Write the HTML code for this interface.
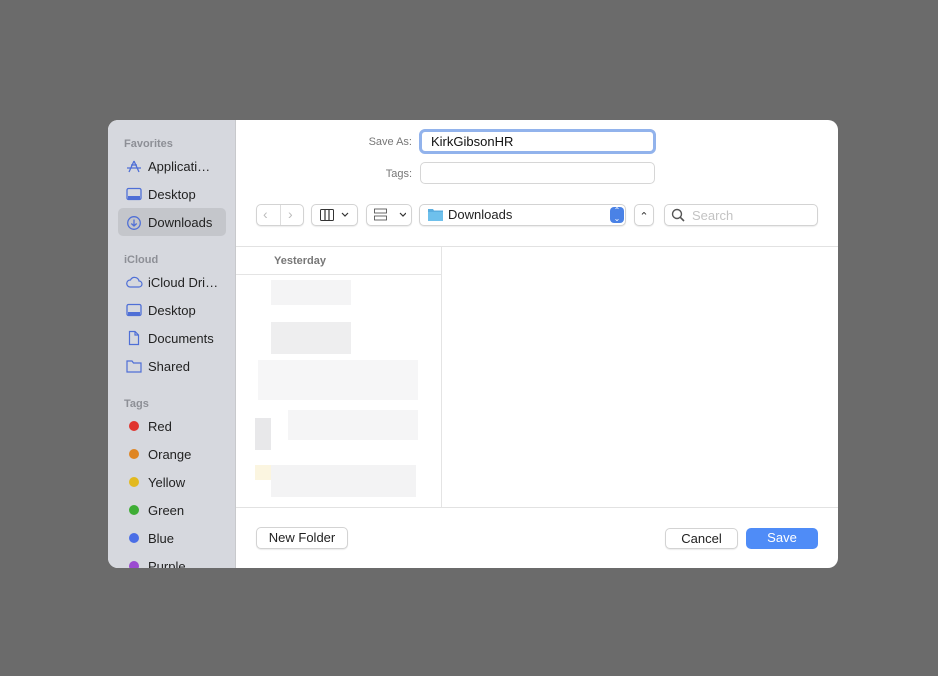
<!DOCTYPE html>
<html><head><meta charset="utf-8"><style>
*{box-sizing:border-box;margin:0;padding:0}
body{width:938px;height:676px;background:#6b6b6b;font-family:"Liberation Sans",sans-serif;position:relative;overflow:hidden}
.dlg{position:absolute;left:108px;top:120px;width:730px;height:448px;background:#fff;border-radius:10px;overflow:hidden}
.side{position:absolute;left:0;top:0;width:128px;height:448px;background:#d6d8de;border-right:1px solid #c8c9cc}
.h{position:absolute;left:16px;font-size:11px;color:#8d8f96;font-weight:bold}
.it{position:absolute;left:40px;font-size:13px;color:#222}
.ic{position:absolute;left:18px}
.dot{position:absolute;left:21px;width:10px;height:10px;border-radius:5px}
.abs{position:absolute}
.lbl{position:absolute;font-size:11px;color:#777;text-align:right}
.btn{position:absolute;background:#fff;border:1px solid #d3d3d3;border-radius:5px;box-shadow:0 1px 1px rgba(0,0,0,.08)}
.blk{position:absolute;background:#f2f2f3}
</style></head><body>
<div class="dlg">
 <div class="side">
  <div class="h" style="top:18px">Favorites</div>
  <svg class="ic" style="top:39px" width="16" height="14"><path d="M3 13L8 2M8 2L13 13M1 9H15M5 6L11 6" stroke="#4f6fd6" stroke-width="1.3" fill="none"/></svg>
  <div class="it" style="top:39px">Applicati…</div>
  <svg class="ic" style="top:67px" width="16" height="14"><rect x="1" y="1.5" width="14" height="11" rx="1.5" stroke="#4f6fd6" stroke-width="1.3" fill="none"/><rect x="2" y="9" width="12" height="3" fill="#4f6fd6"/></svg>
  <div class="it" style="top:67px">Desktop</div>
  <div class="abs" style="left:10px;top:88px;width:108px;height:28px;background:#c4c6cb;border-radius:5px"></div>
  <svg class="ic" style="top:95px" width="16" height="16"><circle cx="8" cy="8" r="6.3" stroke="#4f6fd6" stroke-width="1.3" fill="none"/><path d="M8 4.5V11M5.3 8.5L8 11L10.7 8.5" stroke="#4f6fd6" stroke-width="1.3" fill="none"/></svg>
  <div class="it" style="top:95px">Downloads</div>
  <div class="h" style="top:134px">iCloud</div>
  <svg class="ic" style="top:155px" width="17" height="14"><path d="M4 12H13A3 3 0 0 0 13 6A4.5 4.5 0 0 0 4.5 5A3.5 3.5 0 0 0 4 12Z" stroke="#4f6fd6" stroke-width="1.2" fill="none"/></svg>
  <div class="it" style="top:155px">iCloud Dri…</div>
  <svg class="ic" style="top:183px" width="16" height="14"><rect x="1" y="1.5" width="14" height="11" rx="1.5" stroke="#4f6fd6" stroke-width="1.3" fill="none"/><rect x="2" y="9" width="12" height="3" fill="#4f6fd6"/></svg>
  <div class="it" style="top:183px">Desktop</div>
  <svg class="ic" style="top:210px" width="16" height="16"><path d="M3.5 1.5H9L12.5 5V14.5H3.5Z M9 1.5V5H12.5" stroke="#4f6fd6" stroke-width="1.2" fill="none"/></svg>
  <div class="it" style="top:211px">Documents</div>
  <svg class="ic" style="top:239px" width="16" height="14"><path d="M1 2H6L7.5 4H15V13H1Z" stroke="#4f6fd6" stroke-width="1.2" fill="none"/></svg>
  <div class="it" style="top:239px">Shared</div>
  <div class="h" style="top:278px">Tags</div>
  <div class="dot" style="top:301px;background:#e0342e"></div><div class="it" style="top:299px">Red</div>
  <div class="dot" style="top:329px;background:#df8522"></div><div class="it" style="top:327px">Orange</div>
  <div class="dot" style="top:357px;background:#e2b91f"></div><div class="it" style="top:355px">Yellow</div>
  <div class="dot" style="top:385px;background:#3ead35"></div><div class="it" style="top:383px">Green</div>
  <div class="dot" style="top:413px;background:#4a6ee6"></div><div class="it" style="top:411px">Blue</div>
  <div class="dot" style="top:441px;background:#9b4bd0"></div><div class="it" style="top:439px">Purple</div>
 </div>
 <div class="lbl" style="left:240px;top:16px;width:64px">Save As:</div>
 <div class="abs" style="left:311px;top:9px;width:237px;height:25px;border:3px solid #92b3ec;border-radius:6px;background:#fff"></div>
 <div class="abs" style="left:323px;top:14px;font-size:13px;color:#111">KirkGibsonHR</div>
 <div class="lbl" style="left:240px;top:48px;width:64px">Tags:</div>
 <div class="abs" style="left:312px;top:42px;width:235px;height:22px;border:1px solid #d6d6d6;border-radius:5px"></div>
 <div class="btn" style="left:148px;top:84px;width:48px;height:22px"></div>
 <div class="abs" style="left:172px;top:85px;width:1px;height:20px;background:#ddd"></div>
 <div class="abs" style="left:155px;top:86px;font-size:14px;color:#bbb">‹</div>
 <div class="abs" style="left:180px;top:86px;font-size:14px;color:#bbb">›</div>
 <div class="btn" style="left:203px;top:84px;width:47px;height:22px"></div>
 <svg class="abs" style="left:212px;top:89px" width="32" height="12"><rect x="0.5" y="0.5" width="13" height="11" rx="1" stroke="#333" fill="none"/><path d="M5 1V11M9 1V11M22 4L25 7L28 4" stroke="#333" stroke-width="1.2" fill="none"/></svg>
 <div class="btn" style="left:258px;top:84px;width:46px;height:22px"></div>
 <svg class="abs" style="left:266px;top:88px" width="32" height="14"><rect x="0.5" y="1" width="12" height="4" stroke="#444" stroke-width=".8" fill="none"/><rect x="0.5" y="8" width="12" height="4" stroke="#444" stroke-width=".8" fill="none"/><path d="M26 5L29 8L32 5" stroke="#333" stroke-width="1.2" fill="none"/></svg>
 <div class="btn" style="left:311px;top:84px;width:207px;height:22px"></div>
 <svg class="abs" style="left:320px;top:88px" width="15" height="13"><path d="M0 1H5L6 2.5H15V13H0Z" fill="#5aaee0"/><rect x="0" y="4" width="15" height="9" fill="#6ec0ec"/></svg>
 <div class="abs" style="left:340px;top:87px;font-size:13px;color:#222">Downloads</div>
 <div class="abs" style="left:502px;top:87px;width:14px;height:16px;background:#4a82e6;border-radius:4px;color:#fff;font-size:8px;line-height:8px;text-align:center">⌃<br>⌄</div>
 <div class="btn" style="left:526px;top:84px;width:20px;height:22px;font-size:11px;text-align:center;line-height:24px;color:#333">⌃</div>
 <div class="btn" style="left:556px;top:84px;width:154px;height:22px"></div>
 <svg class="abs" style="left:563px;top:88px" width="14" height="14"><circle cx="6" cy="6" r="4.5" stroke="#555" stroke-width="1.4" fill="none"/><path d="M9.3 9.3L13 13" stroke="#555" stroke-width="1.6"/></svg>
 <div class="abs" style="left:584px;top:88px;font-size:13px;color:#c3c3c3">Search</div>
 <div class="abs" style="left:128px;top:126px;width:602px;height:1px;background:#e2e2e2"></div>
 <div class="abs" style="left:333px;top:127px;width:1px;height:260px;background:#e4e4e4"></div>
 <div class="abs" style="left:166px;top:135px;font-size:11px;color:#777;font-weight:bold">Yesterday</div>
 <div class="abs" style="left:128px;top:154px;width:205px;height:1px;background:#e4e4e4"></div>
 <div class="blk" style="left:163px;top:160px;width:80px;height:25px;background:#f4f4f5"></div>
 <div class="blk" style="left:163px;top:202px;width:80px;height:32px;background:#eeeeef"></div>
 <div class="blk" style="left:150px;top:240px;width:160px;height:40px;background:#f6f6f7"></div>
 <div class="blk" style="left:147px;top:298px;width:16px;height:32px;background:#e8e8ea"></div>
 <div class="blk" style="left:180px;top:290px;width:130px;height:30px;background:#f5f5f6"></div>
 <div class="blk" style="left:147px;top:345px;width:16px;height:15px;background:#fbf5e0"></div>
 <div class="blk" style="left:163px;top:345px;width:145px;height:32px;background:#f3f3f4"></div>
 <div class="abs" style="left:128px;top:387px;width:602px;height:1px;background:#e2e2e2"></div>
 <div class="btn" style="left:148px;top:407px;width:92px;height:22px;font-size:13px;text-align:center;line-height:20px;color:#222">New Folder</div>
 <div class="btn" style="left:557px;top:408px;width:73px;height:21px;font-size:13px;text-align:center;line-height:19px;color:#222">Cancel</div>
 <div class="abs" style="left:638px;top:408px;width:72px;height:21px;background:#4f8cf7;border-radius:5px;font-size:13px;text-align:center;line-height:20px;color:#fff">Save</div>
</div>
</body></html>
